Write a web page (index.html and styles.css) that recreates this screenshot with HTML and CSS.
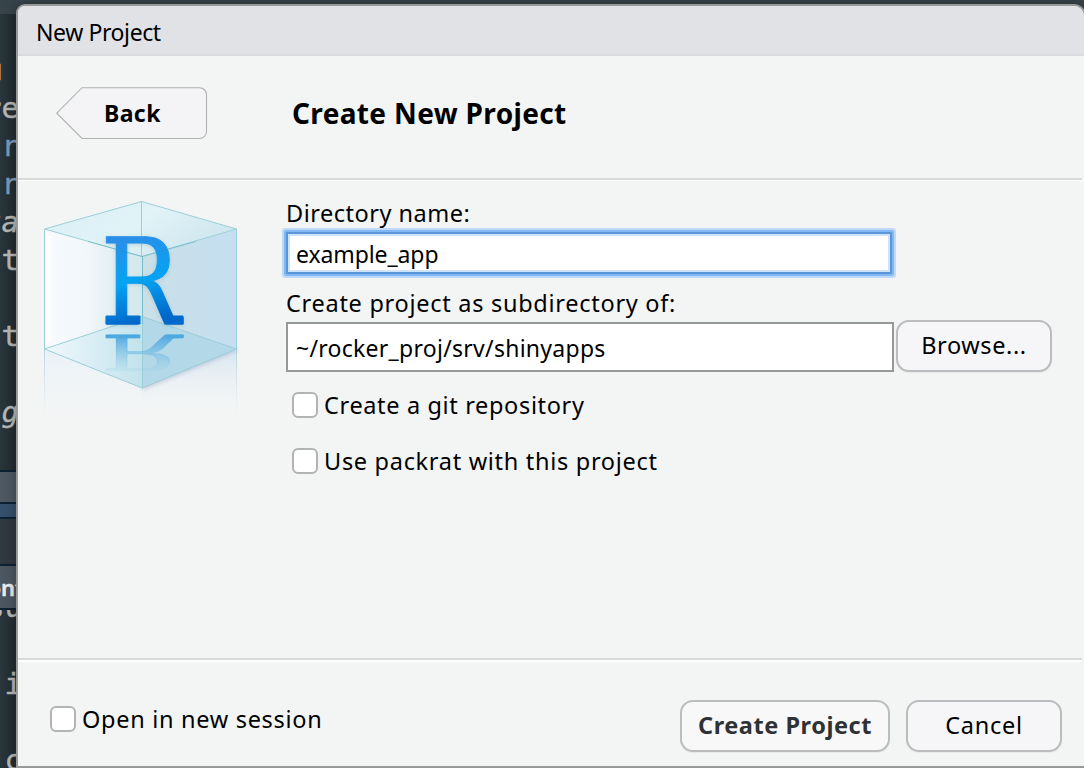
FILE: index.html
```html
<!DOCTYPE html>
<html lang="en">
<head>
<meta charset="utf-8">
<title>New Project</title>
<link rel="stylesheet" href="styles.css">
</head>
<body>
<div class="screen">
  <div class="backdrop">
    <div class="toolbar"></div>
    <div class="editor">
      <div class="line orange">u</div>
      <div class="line">re</div>
      <div class="line blue">sr</div>
      <div class="line blue">sr</div>
      <div class="line italic">ta</div>
      <div class="line">tt</div>
      <div class="line"></div>
      <div class="line">tt</div>
      <div class="line"></div>
      <div class="line italic under">ng</div>
    </div>
    <div class="status"></div>
    <div class="splitter"></div>
    <div class="gap"></div>
    <div class="tab">ont</div>
    <div class="console">
      <div class="cline first">su</div>
      <div class="cline second-line">i</div>
      <div class="cline last">c</div>
    </div>
  </div>
  <div class="dialog">
    <div class="caption"><span class="t-caption">New Project</span></div>
    <div class="header">
      <div class="back">
        <svg class="back-shape" width="152" height="53" viewBox="0 0 152 53"><path d="M.8 26.2 26 .7H143.500a7 7 0 0 1 7 7V44.500a7 7 0 0 1-7 7H26Z" fill="#f4f4f7" stroke="#b0b1b3" stroke-width="1.100"/></svg>
        <span class="t-back">Back</span>
      </div>
      <h1 class="t-title">Create New Project</h1>
    </div>
    <div class="body">
      <svg class="logo" width="230" height="240" viewBox="30 190 230 240">
        <defs>
          <linearGradient id="gl" x1="0" x2="1"><stop offset="0" stop-color="#f8fbff"/><stop offset=".45" stop-color="#f0f6f9"/><stop offset="1" stop-color="#d2e8ec"/></linearGradient>
          <linearGradient id="gr" x1="0" x2="1"><stop offset="0" stop-color="#cbdfe6"/><stop offset="1" stop-color="#c4dff2"/></linearGradient>
          <linearGradient id="gt" x1="0" x2="1" y1="0" y2=".4"><stop offset="0" stop-color="#d8eef5"/><stop offset=".55" stop-color="#e1f3f7"/><stop offset="1" stop-color="#cfe7ef"/></linearGradient>
          <linearGradient id="gb" x1="0" x2="1"><stop offset="0" stop-color="#f0f8fd"/><stop offset="1" stop-color="#c2e3ec"/></linearGradient>
          <linearGradient id="letter" gradientUnits="userSpaceOnUse" x1="130" x2="150" y1="236" y2="324"><stop offset="0" stop-color="#2a8ee8"/><stop offset=".5" stop-color="#05a3f3"/><stop offset=".95" stop-color="#0068cb"/></linearGradient>
          <linearGradient id="mirror" gradientUnits="userSpaceOnUse" x1="0" x2="0" y1="236" y2="324"><stop offset="0" stop-color="#8cc8e6" stop-opacity=".15"/><stop offset="1" stop-color="#4aa7e0"/></linearGradient>
          <linearGradient id="fl" x1="0" x2="0" y1="0" y2="1"><stop offset="0" stop-color="#e9f2f9"/><stop offset="1" stop-color="#f2f4f5" stop-opacity="0"/></linearGradient>
          <linearGradient id="fr" x1="0" x2="0" y1="0" y2="1"><stop offset="0" stop-color="#d6e6f2"/><stop offset=".9" stop-color="#f2f4f5" stop-opacity="0"/></linearGradient>
          <linearGradient id="fe" gradientUnits="userSpaceOnUse" x1="0" x2="0" y1="349" y2="420"><stop offset="0" stop-color="#b5d5e1"/><stop offset="1" stop-color="#dfe8ec" stop-opacity="0"/></linearGradient>
          <filter id="soft" x="-20%" y="-20%" width="140%" height="140%"><feGaussianBlur stdDeviation="2"/></filter>
        </defs>
        <path d="M44.300 349 142 388V424H44.300Z" fill="url(#fl)"/>
        <path d="M237 349 142 388V424H237Z" fill="url(#fr)"/>
        <path d="M44.500 349V420M236.500 349V420" stroke="url(#fe)" fill="none"/>
        <path d="M142 316 239 350 142 390Z" fill="#a9b0cf" opacity=".65" filter="url(#soft)"/>
        <path d="M44.300 229 142 256.500V316.500L44.300 349Z" fill="url(#gl)"/>
        <path d="M237 229 142 256.500V316.500L237 349Z" fill="url(#gr)"/>
        <path d="M141.500 201.500 237 229 142 256.500 44.300 229Z" fill="url(#gt)"/>
        <path d="M44.300 349 142 316.500V388Z" fill="url(#gb)"/>
        <path d="M237 349 142 316.500V388Z" fill="#b3d8e8"/>
        <path d="M49 236V342" stroke="#fff" stroke-width="4" opacity=".8"/>
        <g fill="none" stroke="#9cced8" stroke-width="1">
          <path d="M44.500 229 141.500 201.500 236.500 229 142 256.500ZM44.500 229V349L142 388 236.500 349V229M44.500 349 142 316.500 236.500 349M141.500 201.500V256M142.500 256V388"/>
        </g>
        <text class="glyph shade" x="100.500" y="324.500" textLength="80" lengthAdjust="spacingAndGlyphs">R</text>
        <g fill="url(#letter)" stroke="url(#letter)">
          <text class="glyph" x="100.500" y="324" textLength="80" lengthAdjust="spacingAndGlyphs">R</text>
          <path d="M106 316H140V324H106ZM166 316H183V324H166Z"/>
        </g>
        <g fill="url(#mirror)" stroke="url(#mirror)" transform="matrix(1 0 0 -.4 0 464.500)">
          <text class="glyph" x="100.500" y="324" textLength="80" lengthAdjust="spacingAndGlyphs">R</text>
          <path d="M106 316H140V324H106ZM166 316H183V324H166Z"/>
        </g>
        <path d="M88 241.500 142 256.500 196 241.500M142.500 256V324" fill="none" stroke="#2a9ab0" opacity=".35"/>
      </svg>
      <div class="form">
        <label class="t-dir">Directory name:</label>
        <div class="input focused"><span class="t-app">example_app</span></div>
        <label class="second t-sub">Create project as subdirectory of:</label>
        <div class="row">
          <div class="input path"><span class="t-path">~/rocker_proj/srv/shinyapps</span></div>
          <div class="button browse"><span class="t-browse">Browse...</span></div>
        </div>
        <div class="check git"><i class="box"></i><span class="t-git">Create a git repository</span></div>
        <div class="check packrat"><i class="box"></i><span class="t-packrat">Use packrat with this project</span></div>
      </div>
    </div>
    <div class="footer">
      <div class="check session"><i class="box"></i><span class="t-open">Open in new session</span></div>
      <div class="button primary"><span class="t-create">Create Project</span></div>
      <div class="button cancel"><span class="t-cancel">Cancel</span></div>
    </div>
  </div>
</div>
</body>
</html>
```
FILE: styles.css
```css
* { box-sizing: border-box; }
body { margin: 0; font: 23px/30px "Noto Sans", "Open Sans", sans-serif; color: #000; }
.screen { position: relative; width: 1084px; height: 768px; overflow: hidden; background: linear-gradient(#37444a 14px, #263238 14px); }
.backdrop { width: 16px; height: 768px; overflow: hidden; display: flex; flex-direction: column; background: linear-gradient(90deg, #29363c, #222c31); font-family: "DejaVu Sans Mono", monospace; font-size: 29px; color: #b8b9b6; -webkit-text-stroke: .4px; }
.toolbar { flex: none; height: 14px; background: #37444a; }
.editor { flex: none; height: 456px; padding-top: 37px; }
.line, .cline { height: 38px; line-height: 38px; width: 19px; display: flex; justify-content: flex-end; }
.orange { color: #c3965c; width: 3px; }
.blue { color: #7b9bb9; }
.italic { font-style: italic; }
.under { text-decoration: underline; }
.status { flex: none; height: 34px; background: #4e5963; border-top: 2px solid #0e2135; border-bottom: 2px solid #0e2135; }
.splitter { flex: none; height: 15px; background: #35506c; border-bottom: 2px solid #0e2135; }
.gap { flex: none; height: 45px; background: #303840; }
.tab { flex: none; height: 46px; width: 24px; background: #4b5761; border-top: 2px solid #0e2135; border-bottom: 2px solid #0e2135; font: 600 22px/42px "Noto Sans", sans-serif; color: #eee; display: flex; justify-content: flex-end; }
.console { flex: none; height: 158px; overflow: hidden; }
.cline { width: 22px; }
.first { margin-top: -22px; }
.second-line { margin-top: 39px; }
.last { margin-top: 38px; }
.dialog { position: absolute; left: 16px; top: 4px; width: 1070px; height: 764px; border: 2px solid #999; border-radius: 9px 12px 0 0; background: #f3f5f5; box-shadow: 0 0 14px rgba(0,0,0,.3); display: flex; flex-direction: column; overflow: hidden; }
.caption { height: 50px; padding: 11px 0 0 18px; background: #e1e2e6; border-bottom: 2px solid #d8dadd; }
.header { height: 124px; margin-right: 2px; display: flex; border-bottom: 2px solid #d8dada; }
.back { display: grid; width: 152px; height: 53px; margin: 31px 0 0 38px; }
.back-shape, .back span { grid-area: 1 / 1; }
.back span { padding: 11px 0 0 48px; }
h1 { margin: 41px 0 0 84px; font-size: 28px; line-height: 32px; font-weight: bold; }
.body { height: 478px; display: flex; padding: 9px 0 0 12px; border-top: 1px solid #fbfcfc; }
.logo { flex: none; display: block; }
.form { padding: 8px 0 0 26px; display: flex; flex-direction: column; align-items: flex-start; }
label { display: block; height: 30px; }
.input { width: 608px; height: 50px; border: 2px solid #979898; background: #fff; padding: 9px 0 0 8px; }
.input.focused { width: 606px; height: 42px; margin-top: 4px; border-color: #5b96d8; box-shadow: 0 0 0 2px #7fb8f4, 0 0 0 4px #c0daf5, inset 0 0 0 2px #cfe4fa; padding-top: 5px; border-radius: 1px; }
.second { margin-top: 14px; }
.row { display: flex; align-items: flex-start; gap: 2px; margin-top: 2px; }
.row .path { margin-top: 2px; }
.button { height: 52px; border: 2px solid #bbbcbd; border-radius: 13px; background: #f6f6f9; display: flex; align-items: center; justify-content: center; padding-bottom: 2px; box-shadow: 0 1px 1px #e7e9e9; }
.browse { width: 156px; }
.check { display: flex; align-items: center; gap: 6px; height: 30px; }
.box { width: 26px; height: 26px; border: 2px solid #b2b3b3; border-radius: 6px; background: #fff; }
.git { margin: 18px 0 0 6px; }
.packrat { margin: 26px 0 0 6px; }
.footer { flex: 1; margin-right: 2px; display: flex; align-items: flex-start; border-top: 2px solid #d8dada; box-shadow: inset 0 2px #fcfdfd; }
.session { margin: 44px auto 0 32px; }
.primary { width: 210px; margin: 40px 16px 0 0; background: #f8f8f8; color: #2f3234; }
.cancel { width: 156px; margin: 40px 20px 0 0; }
.glyph { font-family: "DejaVu Serif Condensed", "DejaVu Serif", serif; font-size: 120px; }
.shade { fill: #7da3b6; opacity: .5; filter: blur(2px); }
span { white-space: nowrap; }
.t-back, .t-create { font-weight: bold; }
.t-caption { letter-spacing: -.4px; }
.t-back { letter-spacing: .4px; }
.t-title { letter-spacing: .35px; }
label, .check, .button { font-size: 23.5px; }
.t-dir { letter-spacing: .5px; }
.t-sub { letter-spacing: .72px; }
.t-app { letter-spacing: -.1px; }
.t-path { letter-spacing: .27px; }
.t-browse { letter-spacing: .6px; }
.t-git { letter-spacing: .65px; }
.t-packrat { letter-spacing: .7px; }
.t-open { letter-spacing: .7px; }
.t-create { letter-spacing: .55px; }
.t-cancel { letter-spacing: .7px; }
```
